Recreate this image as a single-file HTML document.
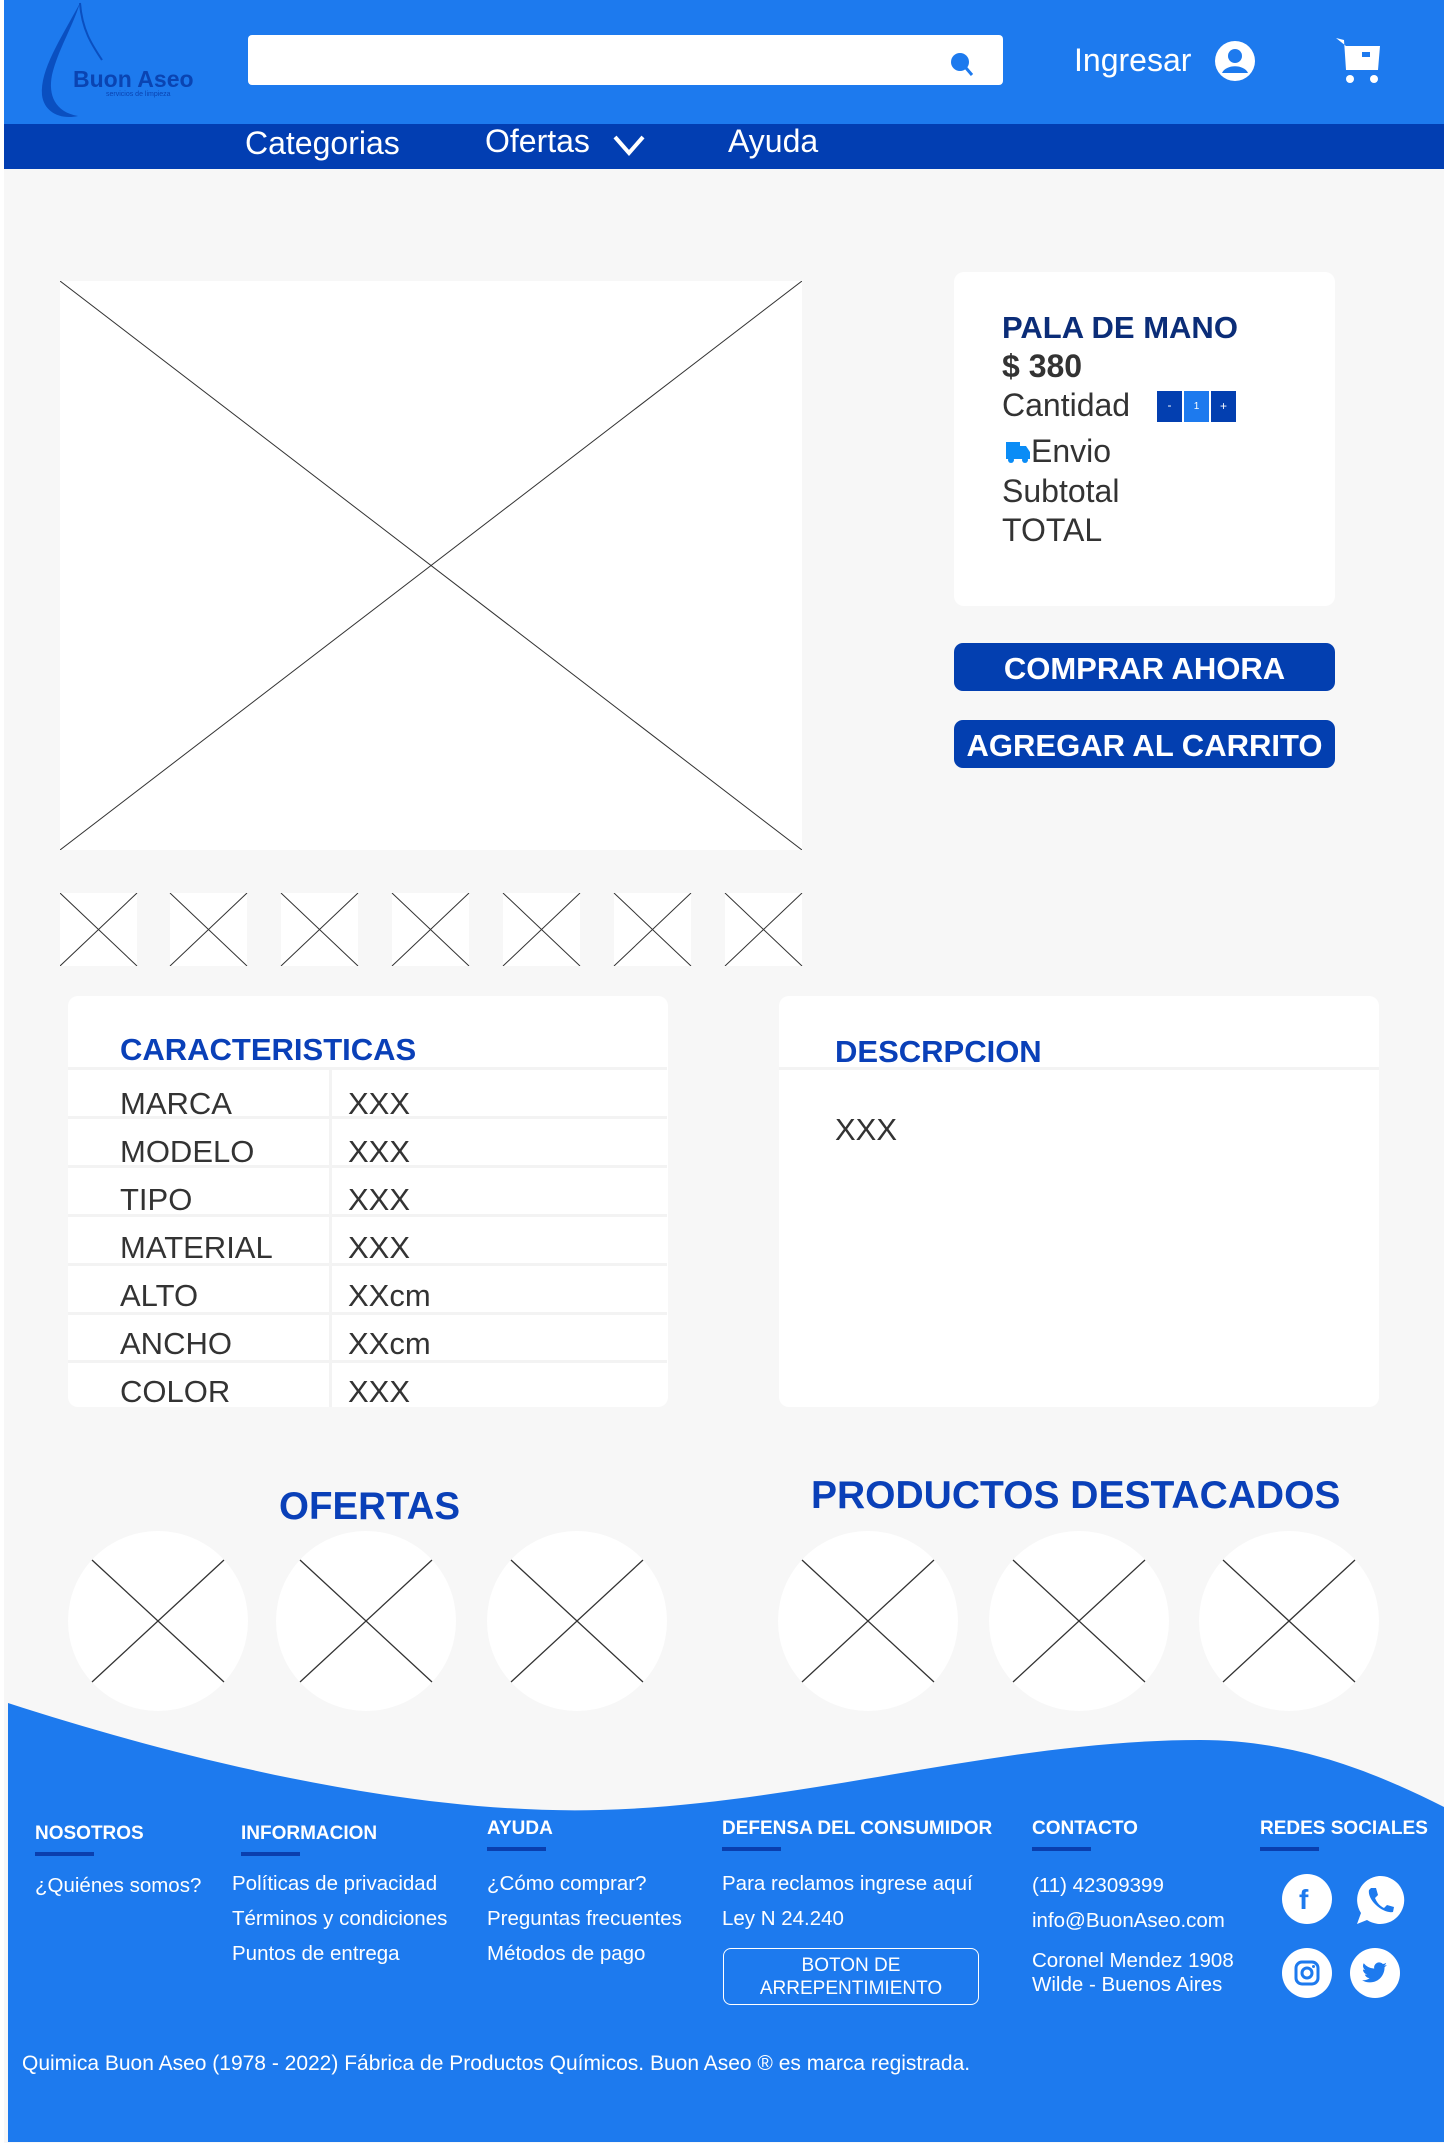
<!DOCTYPE html>
<html><head><meta charset="utf-8">
<style>
*{margin:0;padding:0;box-sizing:border-box}
body{width:1448px;height:2151px;background:#fff;font-family:"Liberation Sans",Arial,sans-serif;position:relative;overflow:hidden}
.a{position:absolute}
.page{position:absolute;left:4px;top:0;width:1440px;height:2143px;background:#f7f7f7}
.t{position:absolute;white-space:nowrap}
.card{position:absolute;background:#fff;border-radius:10px}
.btn{position:absolute;background:#033fb0;border-radius:9px;color:#fff;font-weight:bold;font-size:31px;text-align:center;line-height:52px}
.row{position:absolute;left:0;width:599px;height:47px;border-top:3px solid #f3f3f3}
.lbl{position:absolute;font-size:31px;color:#333;}
.fh{position:absolute;color:#fff;font-weight:bold;font-size:19px;white-space:nowrap}
.fh:after{content:"";position:absolute;left:0;top:29px;width:59px;height:4px;background:#0a3fae}
.fl{position:absolute;color:#fff;font-size:20.5px;white-space:nowrap}
.soc{position:absolute;width:50px;height:50px;border-radius:50%;background:#fff}
</style></head><body>
<div class="page"></div>
<!-- header -->
<div class="a" style="left:4px;top:0;width:1440px;height:124px;background:#1d7aee"></div>
<div class="a" style="left:4px;top:124px;width:1440px;height:45px;background:#023eb2"></div>
<svg class="a" style="left:30px;top:0" width="180" height="122" viewBox="0 0 180 122">
<path d="M50 3 C30 40 10 70 12 95 C14 112 30 120 48 116 C25 112 18 95 22 75 C28 50 42 28 50 3 Z" fill="#0a4fc0"/>
<path d="M50 3 C52 30 62 45 72 60" stroke="#0a4fc0" stroke-width="2" fill="none"/>
<text x="43" y="87" font-family="Liberation Sans" font-weight="bold" font-size="23" fill="#0a44b2">Buon Aseo</text>
<text x="76" y="96" font-family="Liberation Sans" font-size="7" fill="#0a44b2">servicios de limpieza</text>
</svg>
<div class="a" style="left:248px;top:35px;width:755px;height:50px;background:#fff;border-radius:4px"></div>
<svg class="a" style="left:948px;top:48px" width="30" height="30" viewBox="0 0 30 30"><circle cx="12" cy="14" r="9" fill="#1d7aee"/><path d="M18 20 L24 27" stroke="#1d7aee" stroke-width="3"/></svg>
<div class="t" style="left:1074px;top:42px;font-size:32px;color:#fff">Ingresar</div>
<svg class="a" style="left:1214px;top:40px" width="42" height="42" viewBox="0 0 42 42"><circle cx="21" cy="21" r="20" fill="#fff"/><circle cx="21" cy="16" r="7" fill="#1d7aee"/><path d="M8 33 C12 24 30 24 34 33 Z" fill="#1d7aee"/></svg>
<svg class="a" style="left:1334px;top:36px" width="52" height="48" viewBox="0 0 52 48"><path d="M2 2 L10 4 L12 34 L44 34 L46 10 L12 10 Z" fill="#fff"/><rect x="28" y="16" width="8" height="5" fill="#1d7aee"/><circle cx="16" cy="43" r="4" fill="#fff"/><circle cx="40" cy="43" r="4" fill="#fff"/></svg>
<div class="t" style="left:245px;top:125px;font-size:32px;color:#fff">Categorias</div>
<div class="t" style="left:485px;top:123px;font-size:32px;color:#fff">Ofertas</div>
<svg class="a" style="left:612px;top:132px" width="34" height="26" viewBox="0 0 34 26"><path d="M3 5 L17 21 L31 5" stroke="#fff" stroke-width="4" fill="none"/></svg>
<div class="t" style="left:728px;top:123px;font-size:32px;color:#fff">Ayuda</div>
<!-- main image -->
<svg class="a" style="left:60px;top:281px" width="742" height="569" viewBox="0 0 742 569"><rect width="742" height="569" fill="#fff"/><path d="M0 0 L742 569 M742 0 L0 569" stroke="#333" stroke-width="1"/></svg>
<!-- thumbs -->
<svg class="a" style="left:60px;top:893px" width="745" height="73">
<g stroke="#333" stroke-width="1">
<rect x="0" width="77" height="73" fill="#fff" stroke="none"/><path d="M0 0 L77 73 M77 0 L0 73"/>
<rect x="110" width="77" height="73" fill="#fff" stroke="none"/><path d="M110 0 L187 73 M187 0 L110 73"/>
<rect x="221" width="77" height="73" fill="#fff" stroke="none"/><path d="M221 0 L298 73 M298 0 L221 73"/>
<rect x="332" width="77" height="73" fill="#fff" stroke="none"/><path d="M332 0 L409 73 M409 0 L332 73"/>
<rect x="443" width="77" height="73" fill="#fff" stroke="none"/><path d="M443 0 L520 73 M520 0 L443 73"/>
<rect x="554" width="77" height="73" fill="#fff" stroke="none"/><path d="M554 0 L631 73 M631 0 L554 73"/>
<rect x="665" width="77" height="73" fill="#fff" stroke="none"/><path d="M665 0 L742 73 M742 0 L665 73"/>
</g></svg>
<!-- product card -->
<div class="card" style="left:954px;top:272px;width:381px;height:334px"></div>
<div class="t" style="left:1002px;top:310px;font-size:31px;font-weight:bold;color:#0b2d78">PALA DE MANO</div>
<div class="t" style="left:1002px;top:348px;font-size:32px;font-weight:bold;color:#333">$ 380</div>
<div class="t" style="left:1002px;top:387px;font-size:32px;color:#333">Cantidad</div>
<div class="a" style="left:1157px;top:391px;width:25px;height:31px;background:#033fb0;color:#fff;font-size:12px;text-align:center;line-height:28px">-</div>
<div class="a" style="left:1184px;top:391px;width:25px;height:31px;background:#1d7aee;color:#fff;font-size:10px;text-align:center;line-height:31px">1</div>
<div class="a" style="left:1211px;top:391px;width:25px;height:31px;background:#033fb0;color:#fff;font-size:12px;text-align:center;line-height:30px">+</div>
<svg class="a" style="left:1005px;top:440px" width="26" height="24" viewBox="0 0 26 24"><path d="M1 2 L15 2 L15 6 L21 6 L25 12 L25 19 L1 19 Z" fill="#0a8cf6"/><circle cx="6" cy="20" r="3" fill="#0a8cf6"/><circle cx="20" cy="20" r="3" fill="#0a8cf6"/></svg>
<div class="t" style="left:1031px;top:433px;font-size:32px;color:#333">Envio</div>
<div class="t" style="left:1002px;top:473px;font-size:32px;color:#333">Subtotal</div>
<div class="t" style="left:1002px;top:512px;font-size:32px;color:#333">TOTAL</div>
<div class="btn" style="left:954px;top:643px;width:381px;height:48px">COMPRAR AHORA</div>
<div class="btn" style="left:954px;top:720px;width:381px;height:48px">AGREGAR AL CARRITO</div>
<!-- caracteristicas -->
<div class="card" style="left:68px;top:996px;width:600px;height:411px;overflow:hidden">
<div class="t" style="left:52px;top:36px;font-size:31px;font-weight:bold;color:#0a40b8">CARACTERISTICAS</div>
<div class="row" style="top:71px"></div><div class="row" style="top:120px"></div><div class="row" style="top:169px"></div><div class="row" style="top:218px"></div><div class="row" style="top:267px"></div><div class="row" style="top:316px"></div><div class="row" style="top:364px"></div>
<div class="a" style="left:261px;top:73px;width:3px;height:340px;background:#f3f3f3"></div>
<div class="lbl" style="left:52px;top:90px">MARCA</div><div class="lbl" style="left:280px;top:90px">XXX</div>
<div class="lbl" style="left:52px;top:138px">MODELO</div><div class="lbl" style="left:280px;top:138px">XXX</div>
<div class="lbl" style="left:52px;top:186px">TIPO</div><div class="lbl" style="left:280px;top:186px">XXX</div>
<div class="lbl" style="left:52px;top:234px">MATERIAL</div><div class="lbl" style="left:280px;top:234px">XXX</div>
<div class="lbl" style="left:52px;top:282px">ALTO</div><div class="lbl" style="left:280px;top:282px">XXcm</div>
<div class="lbl" style="left:52px;top:330px">ANCHO</div><div class="lbl" style="left:280px;top:330px">XXcm</div>
<div class="lbl" style="left:52px;top:378px">COLOR</div><div class="lbl" style="left:280px;top:378px">XXX</div>
</div>
<!-- descripcion -->
<div class="card" style="left:779px;top:996px;width:600px;height:411px">
<div class="t" style="left:56px;top:38px;font-size:31px;font-weight:bold;color:#0a40b8">DESCRPCION</div>
<div class="a" style="left:0;top:71px;width:600px;height:3px;background:#f3f3f3"></div>
<div class="lbl" style="left:56px;top:116px">XXX</div>
</div>
<!-- titles -->
<div class="t" style="left:279px;top:1485px;font-size:38.5px;font-weight:bold;color:#0a40b8">OFERTAS</div>
<div class="t" style="left:811px;top:1474px;font-size:39px;font-weight:bold;color:#0a40b8">PRODUCTOS DESTACADOS</div>
<!-- circles -->
<svg class="a" style="left:0;top:1520px" width="1448" height="200">
<g fill="#fff"><circle cx="158" cy="101" r="90"/><circle cx="366" cy="101" r="90"/><circle cx="577" cy="101" r="90"/><circle cx="868" cy="101" r="90"/><circle cx="1079" cy="101" r="90"/><circle cx="1289" cy="101" r="90"/></g>
<g stroke="#333" stroke-width="1.3">
<path d="M92 40 L224 162 M224 40 L92 162"/><path d="M300 40 L432 162 M432 40 L300 162"/><path d="M511 40 L643 162 M643 40 L511 162"/>
<path d="M802 40 L934 162 M934 40 L802 162"/><path d="M1013 40 L1145 162 M1145 40 L1013 162"/><path d="M1223 40 L1355 162 M1355 40 L1223 162"/>
</g></svg>
<!-- footer -->
<svg class="a" style="left:0;top:1695px" width="1448" height="450" viewBox="0 0 1448 450"><path d="M8 8 C200 70 420 120 600 115 C800 110 1000 45 1200 45 C1300 45 1380 80 1444 112 L1444 447 L8 447 Z" fill="#1d7aee"/></svg>
<div class="fh" style="left:35px;top:1823px">NOSOTROS</div>
<div class="fh" style="left:241px;top:1823px">INFORMACION</div>
<div class="fh" style="left:487px;top:1818px">AYUDA</div>
<div class="fh" style="left:722px;top:1818px">DEFENSA DEL CONSUMIDOR</div>
<div class="fh" style="left:1032px;top:1818px">CONTACTO</div>
<div class="fh" style="left:1260px;top:1818px">REDES SOCIALES</div>
<div class="fl" style="left:35px;top:1874px">¿Quiénes somos?</div>
<div class="fl" style="left:232px;top:1872px">Políticas de privacidad</div>
<div class="fl" style="left:232px;top:1907px">Términos y condiciones</div>
<div class="fl" style="left:232px;top:1942px">Puntos de entrega</div>
<div class="fl" style="left:487px;top:1872px">¿Cómo comprar?</div>
<div class="fl" style="left:487px;top:1907px">Preguntas frecuentes</div>
<div class="fl" style="left:487px;top:1942px">Métodos de pago</div>
<div class="fl" style="left:722px;top:1872px">Para reclamos ingrese aquí</div>
<div class="fl" style="left:722px;top:1907px">Ley N 24.240</div>
<div class="a" style="left:723px;top:1948px;width:256px;height:57px;border:1.5px solid #fff;border-radius:8px;color:#fff;font-size:19px;text-align:center;line-height:23px;padding-top:5px">BOTON DE<br>ARREPENTIMIENTO</div>
<div class="fl" style="left:1032px;top:1874px">(11) 42309399</div>
<div class="fl" style="left:1032px;top:1909px">info@BuonAseo.com</div>
<div class="fl" style="left:1032px;top:1949px">Coronel Mendez 1908</div>
<div class="fl" style="left:1032px;top:1973px">Wilde - Buenos Aires</div>
<div class="soc" style="left:1282px;top:1874px"></div>
<div class="t" style="left:1299px;top:1884px;font-size:28px;font-weight:bold;color:#1d7aee">f</div>
<svg class="a" style="left:1353px;top:1874px" width="52" height="52" viewBox="0 0 52 52"><path d="M26 2 A24 24 0 1 1 14 46 L4 50 L8 39 A24 24 0 0 1 26 2 Z" fill="#fff"/><path d="M18 14 L23 14 L25 21 L22 24 C24 29 27 32 31 34 L34 31 L41 33 L40 38 C30 40 14 26 16 16 Z" fill="#1d7aee"/></svg>
<div class="soc" style="left:1282px;top:1948px"></div>
<svg class="a" style="left:1294px;top:1960px" width="26" height="26" viewBox="0 0 26 26"><rect x="2" y="2" width="22" height="22" rx="6" fill="none" stroke="#1d7aee" stroke-width="3"/><circle cx="13" cy="13" r="5" fill="none" stroke="#1d7aee" stroke-width="3"/><circle cx="19.5" cy="6.5" r="1.5" fill="#1d7aee"/></svg>
<div class="soc" style="left:1350px;top:1948px"></div>
<svg class="a" style="left:1362px;top:1961px" width="26" height="24" viewBox="0 0 24 20"><path d="M23 2.5 c-.8.4-1.8.6-2.7.7 1-.6 1.7-1.5 2-2.6-.9.5-1.900.9-3 1.1A4.7 4.7 0 0 0 11.3 6 13.4 13.4 0 0 1 1.6 1 4.7 4.7 0 0 0 3 7.3c-.8 0-1.5-.2-2.1-.6 0 2.3 1.6 4.2 3.8 4.6-.7.2-1.4.2-2.1.1.6 1.9 2.3 3.2 4.4 3.3A9.5 9.5 0 0 1 0 16.6 13.4 13.4 0 0 0 7.3 18.7c8.7 0 13.5-7.2 13.5-13.5v-.6c.9-.6 1.7-1.4 2.3-2.2z" fill="#1d7aee"/></svg>
<div class="fl" style="left:22px;top:2052px;font-size:21px">Quimica Buon Aseo (1978 - 2022) Fábrica de Productos Químicos. Buon Aseo ® es marca registrada.</div>
</body></html>
